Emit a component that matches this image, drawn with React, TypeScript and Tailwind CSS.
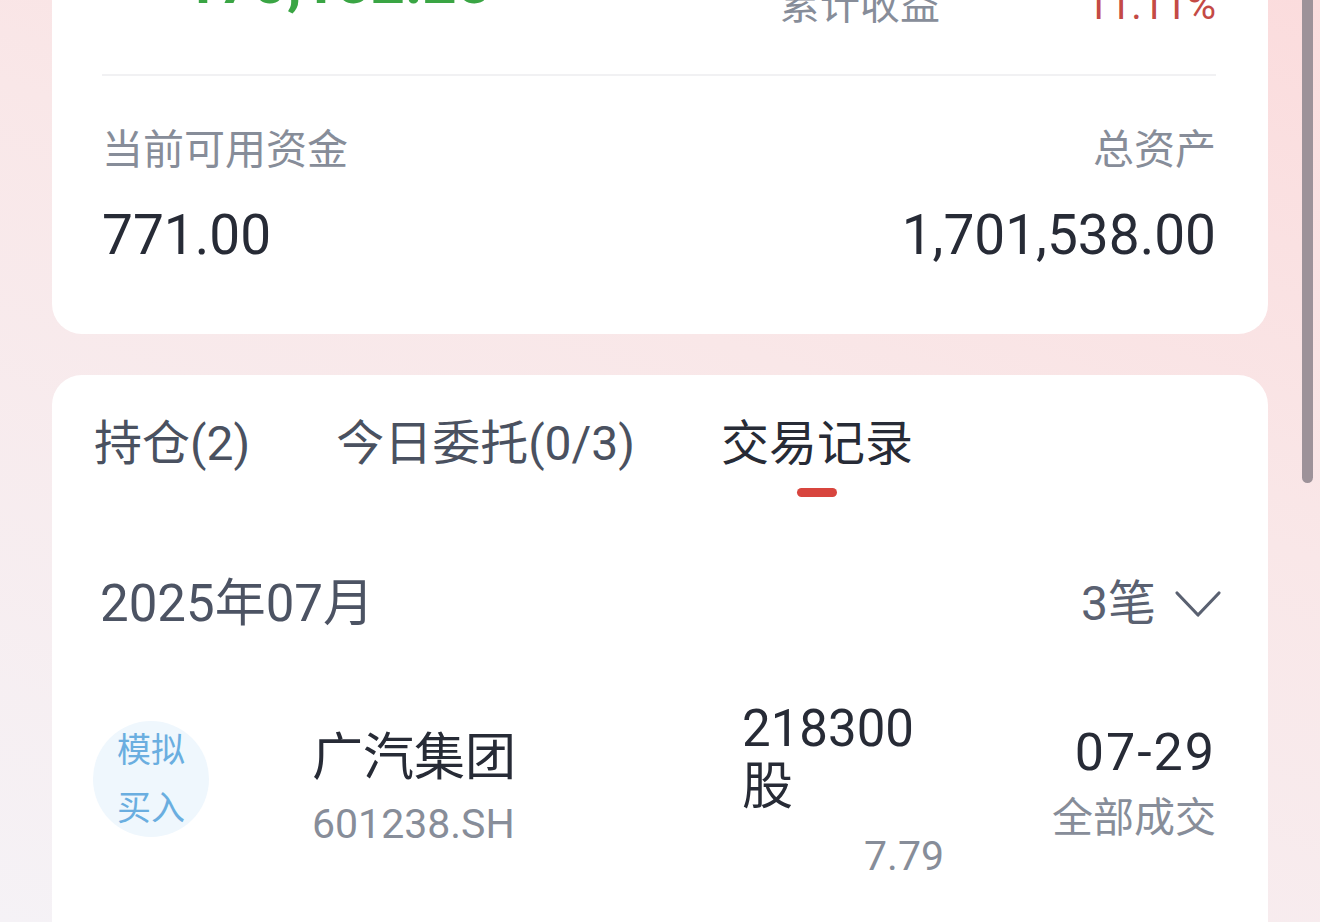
import React from "react";

const tabs = [
  { label: "持仓(2)", active: false },
  { label: "今日委托(0/3)", active: false },
  { label: "交易记录", active: true },
];

const ChevronDown = () => (
  <svg width="48" height="32" viewBox="0 0 48 32" fill="none">
    <path
      d="M3 5 L24 27 L45 5"
      stroke="#5a6171"
      strokeWidth="3.2"
      strokeLinecap="round"
      strokeLinejoin="round"
    />
  </svg>
);

const AccountCard: React.FC = () => (
  <div className="bg-white rounded-[30px] px-[50px] pr-[52px] pb-[68px] -mt-[126px]">
    <div className="flex items-end justify-between pt-[60px]">
      <div className="ml-[58px] mb-[17px] text-[60px] leading-[60px] font-bold text-[#3aa544]">
        -170,152.25
      </div>
      <div className="flex flex-col w-[436px]">
        <div className="flex justify-between text-[40px] leading-[48px]">
          <span className="text-[#878d99]">当日收益</span>
          <span className="text-[#c44a45]">0.00%</span>
        </div>
        <div className="flex justify-between text-[40px] leading-[48px]">
          <span className="text-[#878d99]">累计收益</span>
          <span className="text-[#c44a45]">11.11%</span>
        </div>
      </div>
    </div>
    <div className="h-[2px] bg-[#f1f1f3] mt-[44px]" />
    <div className="flex justify-between mt-[50px]">
      <div className="flex flex-col">
        <span className="text-[41px] leading-[48px] text-[#878d99]">当前可用资金</span>
        <span className="mt-[30px] text-[55px] leading-[62px] text-[#272b36]">771.00</span>
      </div>
      <div className="flex flex-col items-end">
        <span className="text-[41px] leading-[48px] text-[#878d99]">总资产</span>
        <span className="mt-[30px] text-[55px] leading-[62px] text-[#272b36]">1,701,538.00</span>
      </div>
    </div>
  </div>
);

const RecordRow: React.FC = () => (
  <div className="flex items-start mt-[68px] pl-[41px] pr-[52px]">
    <div className="mt-[21px] w-[116px] h-[116px] rounded-full bg-[#eff7fd] flex flex-col items-center justify-center text-[34px] leading-[58px] text-[#6aaee0]">
      <span>模拟</span>
      <span>买入</span>
    </div>
    <div className="ml-[103px] w-[430px] mt-[29px] flex flex-col">
      <span className="text-[51px] leading-[58px] text-[#272b36]">广汽集团</span>
      <span className="mt-[13px] text-[41px] leading-[48px] text-[#878d99]">601238.SH</span>
    </div>
    <div className="w-[202px] flex flex-col">
      <span className="text-[51px] leading-[58px] text-[#272b36]">218300 股</span>
      <span className="mt-[16px] text-right text-[41px] leading-[48px] text-[#878d99]">7.79</span>
    </div>
    <div className="flex-1 mt-[24px] flex flex-col items-end">
      <span className="text-[52px] leading-[58px] tracking-[2px] text-[#272b36]">07-29</span>
      <span className="mt-[12px] text-[41px] leading-[48px] text-[#878d99]">全部成交</span>
    </div>
  </div>
);

const RecordsCard: React.FC = () => (
  <div className="bg-white rounded-t-[30px] mt-[41px] pb-[80px]">
    <div className="flex gap-[86px] pl-[42px] pt-[41px]">
      {tabs.map((t) => (
        <div key={t.label} className="flex flex-col items-center">
          <span
            className={
              t.active
                ? "text-[48px] leading-[56px] text-[#272b36]"
                : "text-[48px] leading-[56px] text-[#4a5160]"
            }
          >
            {t.label}
          </span>
          <div
            className={
              t.active
                ? "mt-[16px] w-[40px] h-[9px] rounded-full bg-[#d8453e]"
                : "mt-[16px] w-[40px] h-[9px]"
            }
          />
        </div>
      ))}
    </div>
    <div className="flex items-center justify-between mt-[79px] pl-[48px] pr-[46px]">
      <span className="text-[51px] leading-[56px] text-[#4c5363]">2025年07月</span>
      <div className="flex items-center gap-[18px]">
        <span className="text-[48px] leading-[56px] text-[#5a6171]">3笔</span>
        <ChevronDown />
      </div>
    </div>
    <RecordRow />
  </div>
);

export default function App() {
  return (
    <div className="relative w-[1320px] h-[922px] overflow-hidden font-[Roboto,'Noto_Sans_CJK_SC',sans-serif] bg-[linear-gradient(200deg,#fbdcdd_0%,#f9e7e8_40%,#f5f2f6_100%)]">
      <div className="px-[52px]">
        <AccountCard />
        <RecordsCard />
      </div>
      <div className="absolute right-[7px] top-0 w-[11px] h-[483px] rounded-b-full bg-[#9d9299]" />
    </div>
  );
}
